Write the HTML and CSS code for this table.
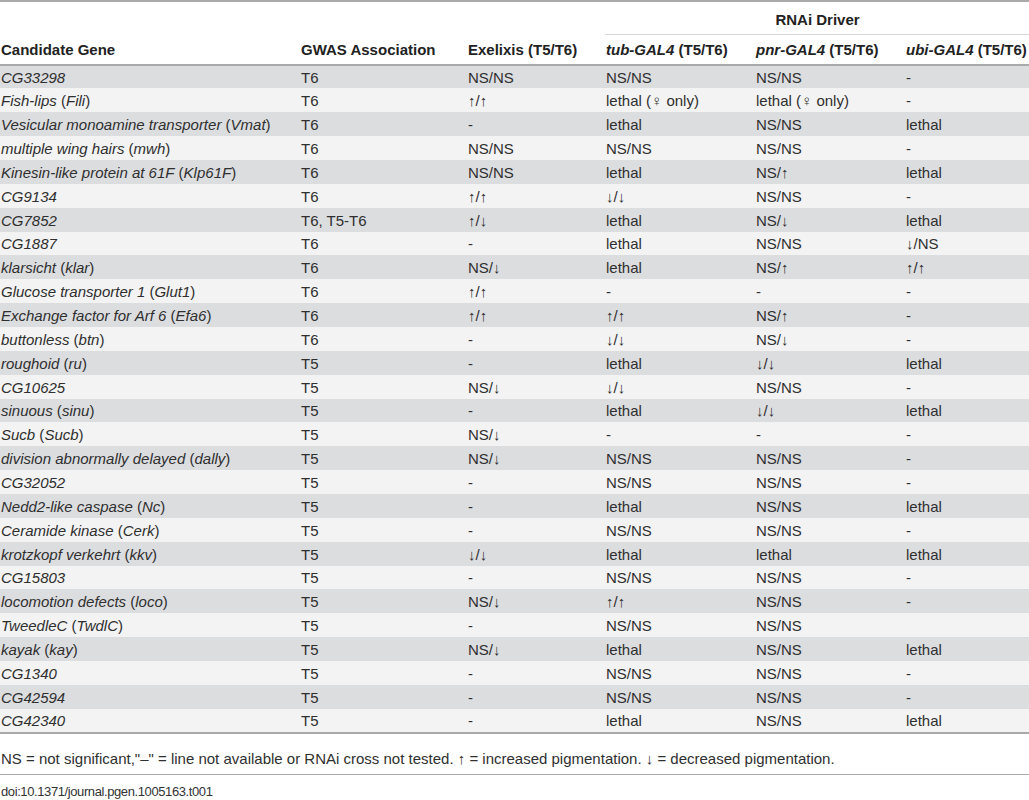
FILE: index.html
```html
<!DOCTYPE html>
<html lang="en">

<head>
	<meta charset="UTF-8" />
	<title>Candidate genes</title>
	<link rel="stylesheet" href="styles.css">
</head>

<body>
	<table class="genes">
		<colgroup>
			<col class="c-gene">
			<col class="c-gwas">
			<col class="c-exel">
			<col class="c-tub">
			<col class="c-pnr">
			<col class="c-ubi">
		</colgroup>
		<thead>
			<tr class="head-top">
				<th></th>
				<th></th>
				<th></th>
				<th colspan="3" class="driver">RNAi Driver</th>
			</tr>
			<tr class="head-cols">
				<th>Candidate Gene</th>
				<th>GWAS Association</th>
				<th>Exelixis (T5/T6)</th>
				<th><i>tub-GAL4</i> (T5/T6)</th>
				<th><i>pnr-GAL4</i> (T5/T6)</th>
				<th><i>ubi-GAL4</i> (T5/T6)</th>
			</tr>
		</thead>
		<tbody>
			<tr><td><i>CG33298</i></td><td>T6</td><td>NS/NS</td><td>NS/NS</td><td>NS/NS</td><td>-</td></tr>
			<tr><td><i>Fish-lips</i> (<i>Fili</i>)</td><td>T6</td><td>↑/↑</td><td>lethal (♀ only)</td><td>lethal (♀ only)</td><td>-</td></tr>
			<tr><td><i>Vesicular monoamine transporter</i> (<i>Vmat</i>)</td><td>T6</td><td>-</td><td>lethal</td><td>NS/NS</td><td>lethal</td></tr>
			<tr><td><i>multiple wing hairs</i> (<i>mwh</i>)</td><td>T6</td><td>NS/NS</td><td>NS/NS</td><td>NS/NS</td><td>-</td></tr>
			<tr><td><i>Kinesin-like protein at 61F</i> (<i>Klp61F</i>)</td><td>T6</td><td>NS/NS</td><td>lethal</td><td>NS/↑</td><td>lethal</td></tr>
			<tr><td><i>CG9134</i></td><td>T6</td><td>↑/↑</td><td>↓/↓</td><td>NS/NS</td><td>-</td></tr>
			<tr><td><i>CG7852</i></td><td>T6, T5-T6</td><td>↑/↓</td><td>lethal</td><td>NS/↓</td><td>lethal</td></tr>
			<tr><td><i>CG1887</i></td><td>T6</td><td>-</td><td>lethal</td><td>NS/NS</td><td>↓/NS</td></tr>
			<tr><td><i>klarsicht</i> (<i>klar</i>)</td><td>T6</td><td>NS/↓</td><td>lethal</td><td>NS/↑</td><td>↑/↑</td></tr>
			<tr><td><i>Glucose transporter 1</i> (<i>Glut1</i>)</td><td>T6</td><td>↑/↑</td><td>-</td><td>-</td><td>-</td></tr>
			<tr><td><i>Exchange factor for Arf 6</i> (<i>Efa6</i>)</td><td>T6</td><td>↑/↑</td><td>↑/↑</td><td>NS/↑</td><td>-</td></tr>
			<tr><td><i>buttonless</i> (<i>btn</i>)</td><td>T6</td><td>-</td><td>↓/↓</td><td>NS/↓</td><td>-</td></tr>
			<tr><td><i>roughoid</i> (<i>ru</i>)</td><td>T5</td><td>-</td><td>lethal</td><td>↓/↓</td><td>lethal</td></tr>
			<tr><td><i>CG10625</i></td><td>T5</td><td>NS/↓</td><td>↓/↓</td><td>NS/NS</td><td>-</td></tr>
			<tr><td><i>sinuous</i> (<i>sinu</i>)</td><td>T5</td><td>-</td><td>lethal</td><td>↓/↓</td><td>lethal</td></tr>
			<tr><td><i>Sucb</i> (<i>Sucb</i>)</td><td>T5</td><td>NS/↓</td><td>-</td><td>-</td><td>-</td></tr>
			<tr><td><i>division abnormally delayed</i> (<i>dally</i>)</td><td>T5</td><td>NS/↓</td><td>NS/NS</td><td>NS/NS</td><td>-</td></tr>
			<tr><td><i>CG32052</i></td><td>T5</td><td>-</td><td>NS/NS</td><td>NS/NS</td><td>-</td></tr>
			<tr><td><i>Nedd2-like caspase</i> (<i>Nc</i>)</td><td>T5</td><td>-</td><td>lethal</td><td>NS/NS</td><td>lethal</td></tr>
			<tr><td><i>Ceramide kinase</i> (<i>Cerk</i>)</td><td>T5</td><td>-</td><td>NS/NS</td><td>NS/NS</td><td>-</td></tr>
			<tr><td><i>krotzkopf verkehrt</i> (<i>kkv</i>)</td><td>T5</td><td>↓/↓</td><td>lethal</td><td>lethal</td><td>lethal</td></tr>
			<tr><td><i>CG15803</i></td><td>T5</td><td>-</td><td>NS/NS</td><td>NS/NS</td><td>-</td></tr>
			<tr><td><i>locomotion defects</i> (<i>loco</i>)</td><td>T5</td><td>NS/↓</td><td>↑/↑</td><td>NS/NS</td><td>-</td></tr>
			<tr><td><i>TweedleC</i> (<i>TwdlC</i>)</td><td>T5</td><td>-</td><td>NS/NS</td><td>NS/NS</td><td></td></tr>
			<tr><td><i>kayak</i> (<i>kay</i>)</td><td>T5</td><td>NS/↓</td><td>lethal</td><td>NS/NS</td><td>lethal</td></tr>
			<tr><td><i>CG1340</i></td><td>T5</td><td>-</td><td>NS/NS</td><td>NS/NS</td><td>-</td></tr>
			<tr><td><i>CG42594</i></td><td>T5</td><td>-</td><td>NS/NS</td><td>NS/NS</td><td>-</td></tr>
			<tr><td><i>CG42340</i></td><td>T5</td><td>-</td><td>lethal</td><td>NS/NS</td><td>lethal</td></tr>
		</tbody>
	</table>

	<p class="note">NS = not significant,"–" = line not available or RNAi cross not tested. ↑ = increased pigmentation. ↓ = decreased pigmentation.</p>
	<p class="doi">doi:10.1371/journal.pgen.1005163.t001</p>
</body>

</html>
```

FILE: styles.css
```css
body {
	margin: 0;
	font-family: "Liberation Sans", Arial, sans-serif;
	font-size: 15px;
	color: #2f2f2f;
	background-color: #fff;
}

.genes {
	width: 1029px;
	border-collapse: collapse;
	table-layout: fixed;
	border-top: 2px solid #a9a9a9;
	border-bottom: 2px solid #a9a9a9;
}

.c-gene {
	width: 300px;
}

.c-gwas {
	width: 167px;
}

.c-exel {
	width: 138px;
}

.c-tub {
	width: 150px;
}

.c-pnr {
	width: 150px;
}

.c-ubi {
	width: 124px;
}

th,
td {
	padding: 0 0 0 1px;
	text-align: left;
	white-space: nowrap;
}

th {
	font-weight: bold;
	vertical-align: bottom;
	color: #222;
}

.head-top th {
	height: 31px;
	padding-bottom: 1px;
}

.head-top .driver {
	text-align: center;
	border-bottom: 1px solid #d6d6d6;
	padding-bottom: 6px;
	height: 24px;
}

.head-cols th {
	padding-bottom: 6px;
	height: 23px;
	border-bottom: 2px solid #a9a9a9;
}

tbody tr {
	height: 23.86px;
}

tbody td {
	vertical-align: middle;
	padding-top: 1px;
}

tbody tr:nth-child(odd) {
	background-color: #dcdddf;
}

tbody tr:nth-child(even) {
	background-color: #f3f3f3;
}

.note {
	margin: 0;
	padding: 16px 0 7px 1px;
	border-bottom: 1px solid #a9a9a9;
	line-height: 17px;
}

.doi {
	margin: 0;
	padding: 8px 0 0 1px;
	font-size: 13px;
	letter-spacing: -0.4px;
	line-height: 17px;
	color: #333;
}
```
